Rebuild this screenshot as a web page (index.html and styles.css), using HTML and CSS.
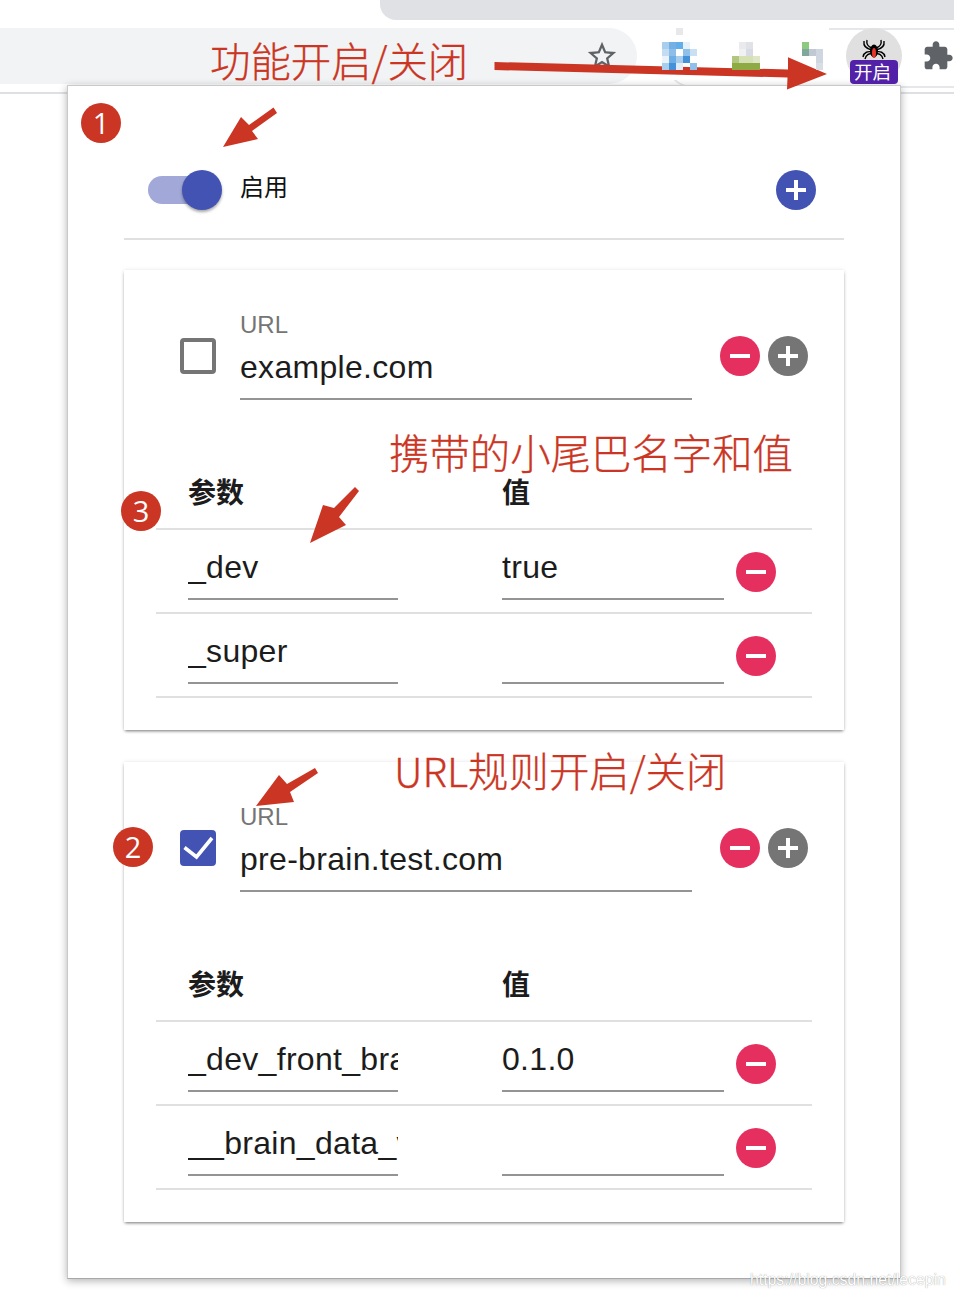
FILE: index.html
```html
<!DOCTYPE html>
<html>

<head>
    <meta charset="utf-8">
    <title>功能开启/关闭</title>
    <link rel="stylesheet" href="styles.css">
</head>

<body>
    <div class="tab-strip">
        <div class="tab"></div>
    </div>
    <div class="toolbar">
        <div class="omnibox">
            <svg class="star" viewBox="0 0 24 24"><path d="M22 9.24l-7.19-.62L12 2 9.19 8.63 2 9.24l5.46 4.73L5.82 21 12 17.27 18.18 21l-1.63-7.03L22 9.24zM12 15.4l-3.76 2.27 1-4.28-3.32-2.88 4.38-.38L12 6.1l1.71 4.04 4.38.38-3.32 2.88 1 4.28L12 15.4z"/></svg>
        </div>
        <div class="ext-area">
            <div class="ext-icon">
                <svg width="35" height="42" shape-rendering="crispEdges">
                    <rect x="14" y="0" width="7" height="7" fill="#e8e8ea"/>
                    <rect x="0" y="14" width="7" height="7" fill="#a9cdec"/>
                    <rect x="7" y="14" width="7" height="7" fill="#72b0e6"/>
                    <rect x="14" y="14" width="7" height="7" fill="#63ade8"/>
                    <rect x="21" y="14" width="7" height="7" fill="#e6f1fa"/>
                    <rect x="0" y="21" width="7" height="7" fill="#c3dcf2"/>
                    <rect x="7" y="21" width="7" height="7" fill="#8dbde9"/>
                    <rect x="21" y="21" width="7" height="7" fill="#8fc0ea"/>
                    <rect x="28" y="21" width="7" height="7" fill="#c8e0f4"/>
                    <rect x="0" y="28" width="7" height="7" fill="#eaf3fb"/>
                    <rect x="7" y="28" width="7" height="7" fill="#6eaee6"/>
                    <rect x="14" y="28" width="7" height="7" fill="#a9cdec"/>
                    <rect x="21" y="28" width="7" height="7" fill="#4591d9"/>
                    <rect x="0" y="35" width="7" height="7" fill="#a9cdec"/>
                    <rect x="7" y="35" width="7" height="7" fill="#4591d9"/>
                    <rect x="14" y="35" width="7" height="7" fill="#e0ecf8"/>
                    <rect x="28" y="35" width="7" height="7" fill="#8fc0ea"/>
                </svg>
            </div>
            <div class="ext-icon">
                <svg width="28" height="42" shape-rendering="crispEdges">
                    <rect x="7" y="14" width="7" height="7" fill="#e9eaee"/>
                    <rect x="14" y="14" width="7" height="7" fill="#e0e2e8"/>
                    <rect x="7" y="21" width="7" height="7" fill="#f0f1f3"/>
                    <rect x="14" y="21" width="7" height="7" fill="#d8dbe3"/>
                    <rect x="0" y="28" width="7" height="7" fill="#b1c67e"/>
                    <rect x="7" y="28" width="14" height="7" fill="#d5e0b5"/>
                    <rect x="21" y="28" width="7" height="7" fill="#dfe6c8"/>
                    <rect x="0" y="35" width="28" height="7" fill="#8eaa45"/>
                </svg>
            </div>
            <div class="ext-icon ext-icon-small">
                <svg width="21" height="42" shape-rendering="crispEdges">
                    <rect x="0" y="14" width="7" height="7" fill="#8dc97e"/>
                    <rect x="0" y="21" width="7" height="7" fill="#80a89a"/>
                    <rect x="7" y="21" width="7" height="7" fill="#c0c8d4"/>
                    <rect x="14" y="21" width="7" height="14" fill="#d0d6e0"/>
                    <rect x="14" y="35" width="7" height="7" fill="#d8dde6"/>
                </svg>
            </div>
            <div class="spider-btn">
                <svg class="spider" viewBox="0 0 24 22">
                    <g fill="none" stroke="#000" stroke-width="1.4">
                        <path d="M10 9C7 8 4 6 5 1M14 9c3-1 6-3 5-8"/>
                        <path d="M10 11C5 10 1 8 2 2M14 11c5-1 9-3 8-9"/>
                        <path d="M10 13c-4-1-8 0-9 5M14 13c4-1 8 0 9 5"/>
                        <path d="M10 15c-3-1-6 1-7 5M14 15c3-1 6 1 7 5"/>
                    </g>
                    <ellipse cx="12" cy="12" rx="4" ry="6.5" fill="#000"/>
                    <ellipse cx="12" cy="14" rx="2" ry="5" fill="#e5352b"/>
                </svg>
                <span class="badge">开启</span>
            </div>
            <svg class="puzzle" viewBox="0 0 24 24"><path d="M20.5 11H19V7c0-1.1-.9-2-2-2h-4V3.5C13 2.12 11.88 1 10.5 1S8 2.12 8 3.5V5H4c-1.1 0-1.99.9-1.99 2v3.8H3.5c1.49 0 2.7 1.21 2.7 2.7s-1.21 2.7-2.7 2.7H2V20c0 1.1.9 2 2 2h3.8v-1.5c0-1.49 1.21-2.7 2.7-2.7 1.49 0 2.7 1.21 2.7 2.7V22H17c1.1 0 2-.9 2-2v-4h1.5c1.38 0 2.5-1.12 2.5-2.5S21.88 11 20.5 11z"/></svg>
        </div>
    </div>

    <div class="popup">
        <div class="enable-row">
            <div class="switch"><span class="switch-thumb"></span></div>
            <span class="enable-label">启用</span>
            <button class="round-btn btn-primary btn-push"><svg viewBox="0 0 40 40"><path d="M18 10h4v8h8v4h-8v8h-4v-8h-8v-4h8z"/></svg></button>
        </div>

        <div class="card">
            <div class="url-row">
                <span class="checkbox"></span>
                <div class="field url-field">
                    <div class="field-label">URL</div>
                    <div class="field-value">example.com</div>
                </div>
                <button class="round-btn btn-danger"><svg viewBox="0 0 40 40"><path d="M10 18h20v4H10z"/></svg></button>
                <button class="round-btn btn-grey"><svg viewBox="0 0 40 40"><path d="M18 10h4v8h8v4h-8v8h-4v-8h-8v-4h8z"/></svg></button>
            </div>
            <div class="params">
                <div class="params-head">
                    <span class="col-name">参数</span>
                    <span class="col-value">值</span>
                </div>
                <div class="params-row">
                    <div class="field-value col-name">_dev</div>
                    <div class="field-value col-value">true</div>
                    <button class="round-btn btn-danger"><svg viewBox="0 0 40 40"><path d="M10 18h20v4H10z"/></svg></button>
                </div>
                <div class="params-row">
                    <div class="field-value col-name">_super</div>
                    <div class="field-value col-value"></div>
                    <button class="round-btn btn-danger"><svg viewBox="0 0 40 40"><path d="M10 18h20v4H10z"/></svg></button>
                </div>
            </div>
        </div>

        <div class="card card-next">
            <div class="url-row">
                <span class="checkbox checked"><svg viewBox="0 0 36 36"><path d="M4.5 17.5L16.5 27 32 8" fill="none" stroke="#fff" stroke-width="3.6"/></svg></span>
                <div class="field url-field">
                    <div class="field-label">URL</div>
                    <div class="field-value">pre-brain.test.com</div>
                </div>
                <button class="round-btn btn-danger"><svg viewBox="0 0 40 40"><path d="M10 18h20v4H10z"/></svg></button>
                <button class="round-btn btn-grey"><svg viewBox="0 0 40 40"><path d="M18 10h4v8h8v4h-8v8h-4v-8h-8v-4h8z"/></svg></button>
            </div>
            <div class="params">
                <div class="params-head">
                    <span class="col-name">参数</span>
                    <span class="col-value">值</span>
                </div>
                <div class="params-row">
                    <div class="field-value col-name">_dev_front_brain</div>
                    <div class="field-value col-value">0.1.0</div>
                    <button class="round-btn btn-danger"><svg viewBox="0 0 40 40"><path d="M10 18h20v4H10z"/></svg></button>
                </div>
                <div class="params-row">
                    <div class="field-value col-name">__brain_data_version</div>
                    <div class="field-value col-value"></div>
                    <button class="round-btn btn-danger"><svg viewBox="0 0 40 40"><path d="M10 18h20v4H10z"/></svg></button>
                </div>
            </div>
        </div>
    </div>

    <!-- 标注层 -->
    <svg class="arrows" width="954" height="1298">
        <polygon points="494.5,62 788,69.5 788,57.3 827,74 787,89.5 787.5,77.5 494.5,70"/>
        <polygon points="273.5,107.5 249,125 241,117 223,147 258,139 252,131 277,113"/>
        <polygon points="355,487 334,508 323,505 310,543 346,525 339,517 359,491"/>
        <polygon points="315,768 287,784 279,775 256,806 294,802 290,792 318,773"/>
    </svg>
    <div class="note note-switch">功能开启/关闭</div>
    <div class="note note-params">携带的小尾巴名字和值</div>
    <div class="note note-rule">URL规则开启/关闭</div>
    <div class="num num-1">1</div>
    <div class="num num-3">3</div>
    <div class="num num-2">2</div>
    <div class="watermark">https://blog.csdn.net/lecepin</div>
</body>
</html>
```

FILE: styles.css
```css
*{
	margin: 0;
	padding: 0;
	box-sizing: border-box;
}
body{
	position: relative;
	width: 954px;
	height: 1298px;
	overflow: hidden;
	background-color: white;
	font-family: "Liberation Sans", "Noto Sans CJK SC", sans-serif;
}

/* 浏览器顶部 */
.tab-strip{
	display: flex;
	justify-content: flex-end;
	height: 20px;
}
.tab{
	width: 574px;
	height: 20px;
	background-color: #dfe1e5;
	border-bottom-left-radius: 16px;
}
.toolbar{
	display: flex;
	height: 74px;
	padding-top: 8px;
	border-bottom: 2px solid #dfe0e4;
}
.omnibox{
	display: flex;
	align-items: center;
	justify-content: flex-end;
	width: 637px;
	height: 56px;
	padding-right: 18px;
	background-color: #f1f3f4;
	border-radius: 0 28px 28px 0;
}
.star{
	width: 34px;
	height: 34px;
	fill: #5f6368;
}
.ext-area{
	position: relative;
	display: flex;
	flex: 1;
	height: 56px;
	padding-left: 25px;
}
.ext-area::before{
	content: "";
	position: absolute;
	left: 28px;
	right: -40px;
	top: 0;
	height: 56px;
	border: 2px solid #e6e7ea;
	border-radius: 28px;
}
.ext-area::after{
	content: "";
	position: absolute;
	left: 0;
	top: -8px;
	width: 192px;
	height: 60px;
	background-color: white;
}
.ext-icon{
	position: relative;
	z-index: 1;
	width: 70px;
}
.ext-icon-small{
	width: 44px;
}
.ext-icon svg{
	display: block;
}
.spider-btn{
	position: relative;
	z-index: 1;
	width: 56px;
	height: 56px;
	border-radius: 50%;
	background-color: #e0e0e0;
}
.spider{
	position: absolute;
	left: 15px;
	top: 11px;
	width: 26px;
	height: 22px;
}
.badge{
	position: absolute;
	left: 4px;
	bottom: 0;
	width: 48px;
	height: 24px;
	padding: 1px 0 0 4px;
	border-radius: 4px;
	background-color: #5221a8;
	color: white;
	font-size: 18.5px;
	line-height: 24px;
}
.puzzle{
	position: relative;
	z-index: 1;
	width: 32px;
	height: 32px;
	margin: 12px 0 0 20px;
	fill: #5f6368;
}

/* 弹出面板 */
.popup{
	position: absolute;
	left: 67px;
	top: 85px;
	width: 834px;
	height: 1194px;
	padding: 84px 56px 56px 56px;
	background-color: white;
	border: 1px solid #c9c9c9;
	border-bottom-color: #a8a8a8;
	box-shadow: 0 2px 8px rgba(0, 0, 0, .3);
}
.enable-row{
	display: flex;
	align-items: center;
	height: 70px;
	padding: 0 28px 28px 24px;
	margin-bottom: 30px;
	border-bottom: 2px solid #e0e0e0;
}
.switch{
	position: relative;
	width: 56px;
	height: 28px;
	border-radius: 14px;
	background-color: #a2a9d8;
}
.switch-thumb{
	position: absolute;
	left: 34px;
	top: -6px;
	width: 40px;
	height: 40px;
	border-radius: 50%;
	background-color: #4353b3;
	box-shadow: 0 2px 3px rgba(0, 0, 0, .35);
}
.enable-label{
	margin: 0 0 4px 36px;
	font-size: 24px;
	line-height: 24px;
	color: #111;
}
.btn-push{
	margin-left: auto;
}
.round-btn{
	flex: none;
	width: 40px;
	height: 40px;
	border: none;
	border-radius: 50%;
}
.round-btn svg{
	display: block;
	fill: white;
}
.btn-primary{
	background-color: #4353b3;
}
.btn-danger{
	background-color: #e5305f;
}
.btn-grey{
	background-color: #757575;
}

/* 规则卡片 */
.card{
	height: 460px;
	padding-top: 42px;
	background-color: white;
	box-shadow: 0 2px 3px -1px rgba(0, 0, 0, .5), 0 0 4px rgba(0, 0, 0, .1);
}
.card-next{
	margin-top: 32px;
}
.url-row{
	display: flex;
	align-items: center;
	padding-left: 56px;
}
.checkbox{
	flex: none;
	width: 36px;
	height: 36px;
	margin-right: 24px;
	border: 4px solid #757575;
	border-radius: 4px;
}
.checkbox.checked{
	border: none;
	background-color: #4353b3;
}
.checkbox svg{
	display: block;
}
.url-field{
	width: 452px;
	margin-right: 28px;
}
.url-row .btn-grey{
	margin-left: 8px;
}
.field-label{
	height: 26px;
	font-size: 24px;
	line-height: 26px;
	color: #757575;
}
.field-value{
	height: 62px;
	overflow: hidden;
	white-space: nowrap;
	font-size: 32px;
	letter-spacing: .3px;
	line-height: 58px;
	color: #1c1c1c;
	border-bottom: 2px solid #949494;
}
.params{
	margin: 46px 32px 0;
}
.params-head{
	display: flex;
	align-items: flex-end;
	height: 84px;
	padding: 0 0 14px 32px;
	border-bottom: 2px solid #e0e0e0;
	font-size: 28px;
	font-weight: bold;
	line-height: 40px;
	color: #1c1c1c;
}
.params-row{
	display: flex;
	align-items: center;
	height: 84px;
	padding-left: 32px;
	border-bottom: 2px solid #e0e0e0;
}
.col-name{
	width: 210px;
	margin-right: 104px;
}
.col-value{
	width: 222px;
	margin-right: 12px;
}
.params-row .field-value{
	margin-top: -4px;
}
.params-row .round-btn{
	margin-top: 2px;
}

/* 标注 */
.arrows{
	position: absolute;
	left: 0;
	top: 0;
	fill: #cb3523;
}
.note{
	position: absolute;
	font-family: "Noto Sans CJK SC", sans-serif;
	font-size: 40.4px;
	font-weight: 300;
	-webkit-text-stroke: .3px #cb3523;
	line-height: 40px;
	white-space: nowrap;
	color: #cb3523;
}
.note-switch{
	left: 210px;
	top: 40px;
}
.note-params{
	left: 389px;
	top: 432px;
}
.note-rule{
	left: 394px;
	top: 750px;
}
.num{
	position: absolute;
	width: 40px;
	height: 40px;
	border-radius: 50%;
	background-color: #cb3523;
	font-family: "Open Sans", sans-serif;
	font-size: 29px;
	line-height: 40px;
	text-align: center;
	color: white;
}
.num-1{
	left: 81px;
	top: 103px;
}
.num-3{
	left: 121px;
	top: 491px;
}
.num-2{
	left: 113px;
	top: 827px;
}
.watermark{
	position: absolute;
	left: 750px;
	top: 1270px;
	font-size: 15.8px;
	line-height: 20px;
	white-space: nowrap;
	color: white;
	text-shadow: 0 0 1px rgba(0, 0, 0, .45);
}
```
